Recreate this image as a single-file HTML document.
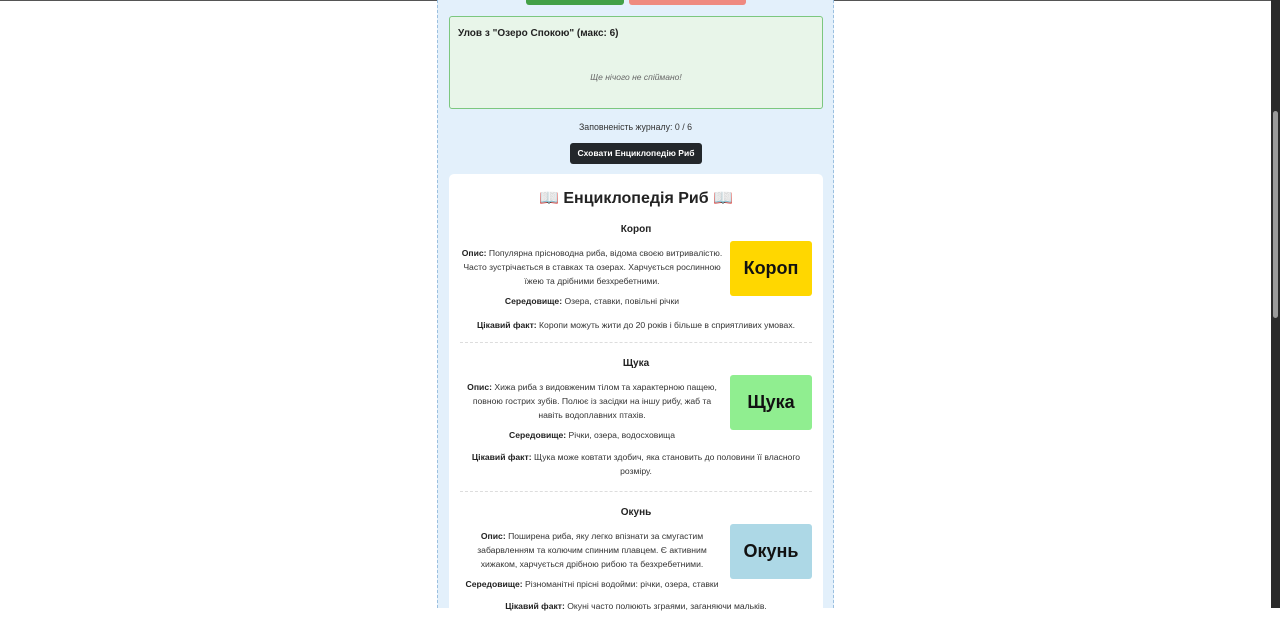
<!DOCTYPE html>
<html><head><meta charset="utf-8"><style>
*{box-sizing:border-box;margin:0;padding:0}
body{width:1280px;height:608px;overflow:hidden;background:#fff;font-family:"Liberation Sans","DejaVu Sans",sans-serif;color:#333;position:relative}
.topline{position:absolute;left:0;top:0;width:1280px;height:1px;background:#555}
.sb{position:absolute;right:0;top:0;width:9px;height:608px;background:#2b2b2b}
.thumb{position:absolute;right:2px;top:111px;width:5px;height:207px;background:#9a9a9a;border-radius:3px}
.wrap{position:absolute;left:437px;top:0;width:397px;height:608px;background:#e3f0fb;border-left:1px dashed #9cc0e0;border-right:1px dashed #9cc0e0}
.bg{position:absolute;top:0;height:5px;border-radius:0 0 3px 3px}
.catch{position:absolute;left:11px;top:16px;width:374px;height:93px;background:#e8f5e9;border:1px solid #7cc77f;border-radius:3px}
.catch h3{font-size:10px;font-weight:bold;color:#222;position:absolute;left:8px;top:11px}
.catch p{position:absolute;left:0;right:0;top:55px;text-align:center;font-size:8.5px;font-style:italic;color:#666}
.fill{position:absolute;left:0;right:0;top:122px;text-align:center;font-size:8.8px;color:#333}
.btn{position:absolute;left:132px;top:143px;width:132px;height:21px;background:#23272b;color:#fff;font-size:8.5px;font-weight:bold;text-align:center;line-height:21px;border-radius:3px}
.card{position:absolute;left:11px;top:174px;width:374px;height:450px;background:#fff;border-radius:5px}
.card h2{text-align:center;font-size:16px;font-weight:bold;color:#222;position:absolute;top:14px;left:0;right:0}
.fish{position:absolute;left:11px;width:352px}
.fish h4{text-align:center;font-size:10px;font-weight:bold;color:#222;height:12px}
.row{display:flex;margin-top:10px}
.txt{flex:1;text-align:center;font-size:8.6px;line-height:14px;padding-right:6px}
.txt p{margin-bottom:6px}
.img{width:82px;height:55px;border-radius:3px;font-size:18px;font-weight:bold;color:#111;display:flex;align-items:center;justify-content:center;flex:none;margin-top:-5px}
.fact{text-align:center;font-size:8.6px;line-height:14px;padding:0 6px}
b{color:#222}
.hr{position:absolute;left:11px;width:352px;border-top:1px dashed #ddd}
</style></head><body>
<div class="topline"></div>
<div class="wrap">
<div class="bg" style="left:88px;width:98px;background:#43a047"></div>
<div class="bg" style="left:191px;width:117px;background:#ef8a80"></div>
<div class="catch"><h3>Улов з "Озеро Спокою" (макс: 6)</h3><p>Ще нічого не спіймано!</p></div>
<div class="fill">Заповненість журналу: 0 / 6</div>
<div class="btn">Сховати Енциклопедію Риб</div>
<div class="card">
<h2>📖 Енциклопедія Риб 📖</h2>
<div class="fish" style="top:50px"><h4>Короп</h4>
<div class="row"><div class="txt"><p><b>Опис:</b> Популярна прісноводна риба, відома своєю витривалістю. Часто зустрічається в ставках та озерах. Харчується рослинною їжею та дрібними безхребетними.</p><p><b>Середовище:</b> Озера, ставки, повільні річки</p></div><div class="img" style="background:#ffd700">Короп</div></div>
<div class="fact" style="margin-top:4px"><b>Цікавий факт:</b> Коропи можуть жити до 20 років і більше в сприятливих умовах.</div></div>
<div class="hr" style="top:168px"></div>
<div class="fish" style="top:184px"><h4>Щука</h4>
<div class="row"><div class="txt"><p><b>Опис:</b> Хижа риба з видовженим тілом та характерною пащею, повною гострих зубів. Полює із засідки на іншу рибу, жаб та навіть водоплавних птахів.</p><p><b>Середовище:</b> Річки, озера, водосховища</p></div><div class="img" style="background:#90ee90">Щука</div></div>
<div class="fact" style="margin-top:2px;padding:0 4px"><b>Цікавий факт:</b> Щука може ковтати здобич, яка становить до половини її власного<br>розміру.</div></div>
<div class="hr" style="top:317px"></div>
<div class="fish" style="top:333px"><h4>Окунь</h4>
<div class="row"><div class="txt"><p><b>Опис:</b> Поширена риба, яку легко впізнати за смугастим забарвленням та колючим спинним плавцем. Є активним хижаком, харчується дрібною рибою та безхребетними.</p><p><b>Середовище:</b> Різноманітні прісні водойми: річки, озера, ставки</p></div><div class="img" style="background:#add8e6">Окунь</div></div>
<div class="fact" style="margin-top:2px"><b>Цікавий факт:</b> Окуні часто полюють зграями, заганяючи мальків.</div></div>
</div>
</div>
<div class="sb"><div class="thumb"></div></div>
</body></html>
